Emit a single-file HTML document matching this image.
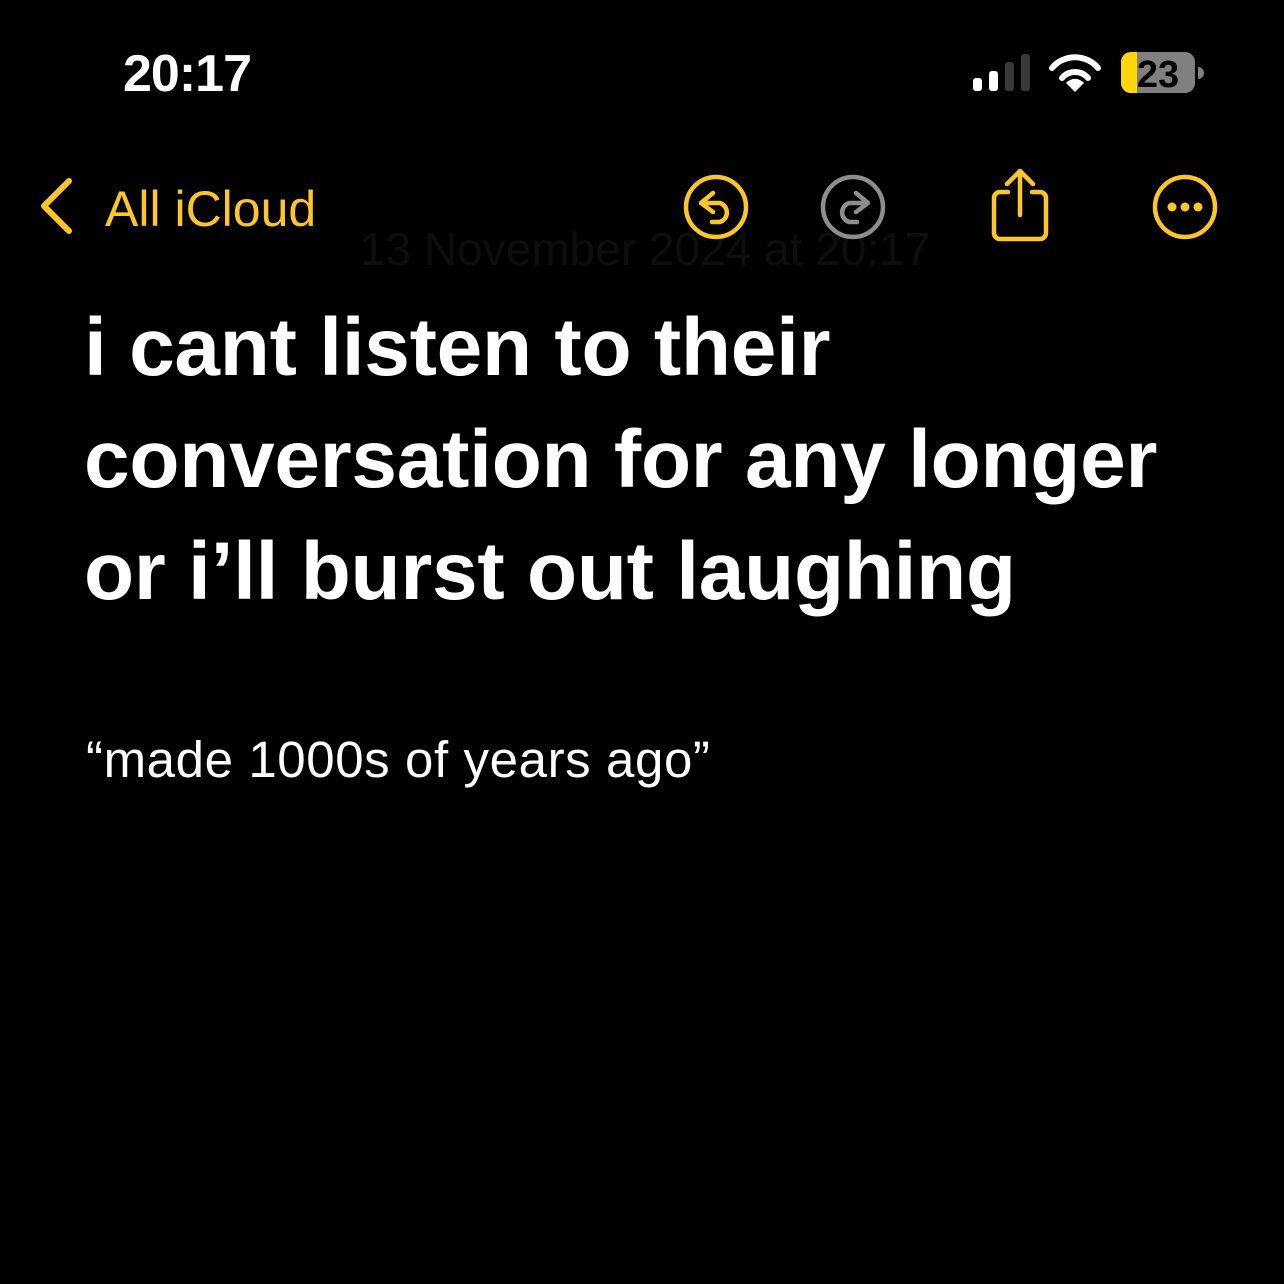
<!DOCTYPE html>
<html><head><style>
body{margin:0;width:1284px;height:1284px;background:#000;overflow:hidden;position:relative;font-family:"Liberation Sans",sans-serif;}
.a{position:absolute;white-space:nowrap}
</style></head><body>
<div class="a" style="left:123px;top:44px;font-size:52px;font-weight:bold;color:#fff;letter-spacing:-1px">20:17</div>
<svg class="a" style="left:970px;top:52px" width="240" height="42">
<rect x="3" y="26" width="9" height="13" rx="3" fill="#fff"/>
<rect x="19" y="19" width="9" height="20" rx="3" fill="#fff"/>
<rect x="35" y="10" width="9" height="29" rx="3" fill="#3a3a3a"/>
<rect x="51" y="2" width="9" height="37" rx="3" fill="#3a3a3a"/>
<path d="M82 16 A30 30 0 0 1 128 16" stroke="#fff" stroke-width="6" fill="none" stroke-linecap="round"/>
<path d="M92 26 A17 17 0 0 1 118 26" stroke="#fff" stroke-width="6" fill="none" stroke-linecap="round"/>
<path d="M96 31 L105 40 L114 31 A12 12 0 0 0 96 31Z" fill="#fff"/>
<rect x="151" y="0" width="74" height="41" rx="10" fill="#808080"/>
<path d="M161 0 H167 V41 H161 A10 10 0 0 1 151 31 V10 A10 10 0 0 1 161 0Z" fill="#ffd60a"/>
<path d="M228 15 A6 6 0 0 1 228 27Z" fill="#808080"/>
<text x="188" y="35" text-anchor="middle" font-family="Liberation Sans" font-weight="bold" font-size="38" fill="#000">23</text>
</svg>
<svg class="a" style="left:36px;top:176px" width="40" height="60"><path d="M33 5 L8 30 L33 55" stroke="#ffc62b" stroke-width="6" fill="none" stroke-linecap="round" stroke-linejoin="round"/></svg>
<div class="a" style="left:105px;top:180px;font-size:50px;color:#ffc62b;">All iCloud</div>
<div class="a" style="left:360px;top:222px;font-size:46px;color:#0e0e0e;">13 November 2024 at 20:17</div>
<svg class="a" style="left:670px;top:160px" width="560" height="110">
<g stroke="#ffc62b" stroke-width="4.5" fill="none" stroke-linecap="round" stroke-linejoin="round">
<circle cx="46" cy="47" r="30"/>
<path d="M43 33 L31 43 L43 52 M31 43 H50 A10 10 0 0 1 50 62 H42"/>
</g>
<g stroke="#8e8e8e" stroke-width="4.5" fill="none" stroke-linecap="round" stroke-linejoin="round">
<circle cx="183" cy="47" r="30"/>
<path d="M186 33 L198 43 L186 52 M198 43 H179 A10 10 0 0 0 179 62 H187"/>
</g>
<g stroke="#ffc62b" stroke-width="4.5" fill="none" stroke-linecap="round" stroke-linejoin="round">
<path d="M338 32 H330 A6 6 0 0 0 324 38 V73 A6 6 0 0 0 330 79 H370 A6 6 0 0 0 376 73 V38 A6 6 0 0 0 370 32 H362"/>
<path d="M350 55 V12 M337 24 L350 11 L363 24"/>
<circle cx="515" cy="47" r="30"/>
</g>
<g fill="#ffc62b"><circle cx="502" cy="47" r="4.5"/><circle cx="515" cy="47" r="4.5"/><circle cx="528" cy="47" r="4.5"/></g>
</svg>
<div class="a" style="left:84px;top:292px;font-size:82px;font-weight:bold;color:#fff;line-height:112px;letter-spacing:-0.25px">i cant listen to their<br>conversation for any longer<br>or i’ll burst out laughing</div>
<div class="a" style="left:86px;top:730px;font-size:51px;color:#fff;letter-spacing:0.6px">“made 1000s of years ago”</div>
</body></html>
